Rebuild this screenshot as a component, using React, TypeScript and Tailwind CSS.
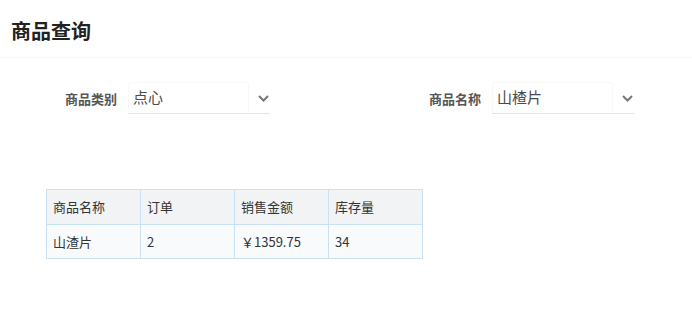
import React from 'react';

const font = { fontFamily: '"Noto Sans CJK SC", "Noto Sans", sans-serif' };

interface SelectFieldProps {
    label: string;
    value: string;
}

const SelectField: React.FC<SelectFieldProps> = ({ label, value }) => {
    return (
        <div className="flex items-center">
            <span className="w-[52px] text-[13px] font-bold text-[#555] leading-none">{label}</span>
            <div className="ml-[11px] w-[142px] h-[32px] relative border-b border-[#e4e4e4]">
                <div className="absolute left-0 top-0 w-[121px] h-[31px] rounded-[3px] border border-b-0 border-[#f8f8f8]" />
                <span className="absolute left-[5px] top-[6px] text-[15px] text-[#4a4a4a] leading-[18px]">{value}</span>
                <svg
                    className="absolute left-[130px] top-[13px]"
                    width="11"
                    height="7"
                    viewBox="0 0 11 7"
                    fill="none"
                >
                    <path d="M1 1l4.5 4.5L10 1" stroke="#777" strokeWidth="2" />
                </svg>
            </div>
        </div>
    );
};

const headers = ['商品名称', '订单', '销售金额', '库存量'];
const rows = [['山渣片', '2', '￥1359.75', '34']];

const App: React.FC = () => {
    return (
        <div className="w-[692px] h-[317px] bg-white" style={font}>
            {/* Title */}
            <div className="h-[58px] border-b border-[#f6f6f6] pl-[11px] pt-[17px]">
                <h1 className="text-[20px] font-bold text-[#222] leading-[28px]">商品查询</h1>
            </div>

            {/* Filters */}
            <div className="flex pt-[24px] pl-[65px]">
                <SelectField label="商品类别" value="点心" />
                <div className="ml-[159px]">
                    <SelectField label="商品名称" value="山楂片" />
                </div>
            </div>

            {/* Result table */}
            <table className="ml-[46px] mt-[75px] border-collapse text-[13px] text-[#333]">
                <thead>
                    <tr className="bg-[#f1f3f5]">
                        {headers.map((h) => (
                            <th
                                key={h}
                                className="w-[94px] h-[35px] border border-[#c9e1f5] pl-[6px] text-left font-normal"
                            >
                                {h}
                            </th>
                        ))}
                    </tr>
                </thead>
                <tbody>
                    {rows.map((r, i) => (
                        <tr key={i} className="bg-[#f8fafc]">
                            {r.map((c, j) => (
                                <td key={j} className="h-[34px] border border-[#c9e1f5] pl-[6px]">
                                    {c}
                                </td>
                            ))}
                        </tr>
                    ))}
                </tbody>
            </table>
        </div>
    );
};

export default App;
